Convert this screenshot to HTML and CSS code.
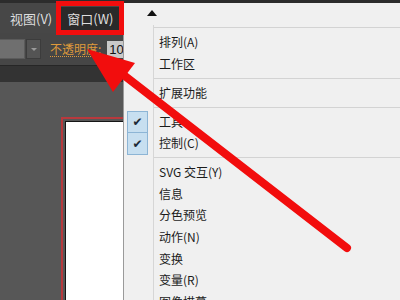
FILE: index.html
```html
<!DOCTYPE html>
<html lang="zh-CN">
<head>
<meta charset="utf-8">
<link rel="stylesheet" href="styles.css">
</head>
<body>
<div class="app">
  <div class="menubar">
    <span class="mb-item">视图(V)</span>
    <span class="mb-item active">窗口(W)</span>
  </div>
  <div class="toolbar">
    <div class="select"></div>
    <div class="select-btn"><span class="tri-down"></span></div>
    <span class="opacity-label">不透明度:</span>
    <span class="num-input">10</span>
  </div>
  <div class="tabband"></div>
  <div class="canvas">
    <div class="artboard-frame"><div class="artboard"></div></div>
  </div>
</div>

<div class="dropdown">
  <div class="dd-head"><span class="tri-up"></span></div>
  <div class="dd-list">
    <div class="sep first"></div>
    <div class="item"><span class="gut"></span><span class="lbl">排列(A)</span></div>
    <div class="item"><span class="gut"></span><span class="lbl">工作区</span></div>
    <div class="sep"></div>
    <div class="item"><span class="gut"></span><span class="lbl">扩展功能</span></div>
    <div class="sep"></div>
    <div class="item"><span class="gut"><span class="check">✔</span></span><span class="lbl">工具</span></div>
    <div class="item"><span class="gut"><span class="check">✔</span></span><span class="lbl">控制(C)</span></div>
    <div class="sep"></div>
    <div class="item"><span class="gut"></span><span class="lbl">SVG 交互(Y)</span></div>
    <div class="item"><span class="gut"></span><span class="lbl">信息</span></div>
    <div class="item"><span class="gut"></span><span class="lbl">分色预览</span></div>
    <div class="item"><span class="gut"></span><span class="lbl">动作(N)</span></div>
    <div class="item"><span class="gut"></span><span class="lbl">变换</span></div>
    <div class="item"><span class="gut"></span><span class="lbl">变量(R)</span></div>
    <div class="item"><span class="gut"></span><span class="lbl">图像描摹</span></div>
  </div>
</div>

<div class="redbox"></div>
<svg class="arrow" width="400" height="300" viewBox="0 0 400 300">
  <line x1="347" y1="248" x2="112" y2="66" stroke="#f20d0d" stroke-width="8" stroke-linecap="round"/>
  <polygon points="87,49 113,92 135,63" fill="#f20d0d"/>
</svg>
</body>
</html>
```
FILE: styles.css
```css
html, body {
  margin: 0;
  padding: 0;
}
body {
  width: 400px;
  height: 300px;
  overflow: hidden;
  position: relative;
  font-family: "Noto Sans CJK SC", "Microsoft YaHei", sans-serif;
  background: #575757;
}
.app {
  display: flex;
  flex-direction: column;
  height: 300px;
  overflow: hidden;
}
.menubar {
  height: 30px;
  border-top: 3px solid #2c2c2c;
  background: #474747;
  display: flex;
  align-items: center;
  padding-left: 3px;
}
.mb-item {
  font-size: 13px;
  color: #dedede;
  padding: 0 7px;
  height: 23px;
  line-height: 24px;
}
.mb-item.active {
  background: #2a2a2a;
  margin-left: 1px;
}
.toolbar {
  height: 32px;
  background: #464646;
  display: flex;
  align-items: center;
}
.select {
  width: 24px;
  height: 18px;
  background: #6f6f6f;
  border: 1px solid #5b5b5b;
  border-left: none;
}
.select-btn {
  width: 13px;
  height: 18px;
  margin-left: 1px;
  background: #545454;
  border: 1px solid #3c3c3c;
  display: flex;
  align-items: center;
  justify-content: center;
}
.tri-down {
  width: 0;
  height: 0;
  border-left: 3px solid transparent;
  border-right: 3px solid transparent;
  border-top: 3px solid #9a9a9a;
}
.opacity-label {
  margin-left: 9px;
  font-size: 12px;
  color: #df9a3b;
  line-height: 15px;
  border-bottom: 1px dotted #df9a3b;
}
.num-input {
  margin-left: 6px;
  width: 20px;
  height: 17px;
  line-height: 17px;
  background: #c9c9c9;
  color: #111;
  font-size: 13px;
  padding-left: 2px;
  font-family: "Liberation Sans", sans-serif;
}
.tabband {
  height: 16px;
  background: #333333;
  border-top: 1px solid #262626;
}
.canvas {
  flex: 1;
  min-height: 0;
  overflow: hidden;
  background: #575757;
  padding-top: 35px;
  padding-left: 61px;
}
.artboard-frame {
  border-top: 2px solid #b8393d;
  border-left: 2px solid #b8393d;
  padding: 2px 0 0 2px;
  height: 200px;
}
.artboard {
  border-top: 1px solid #151515;
  border-left: 1px solid #151515;
  background: #ffffff;
  height: 200px;
}
.dropdown {
  position: absolute;
  left: 123px;
  top: 3px;
  right: 0;
  bottom: 0;
  overflow: hidden;
  background: #f0f0f0;
  border-left: 1px solid #9a9a9a;
}
.dd-head {
  height: 24px;
  position: relative;
}
.tri-up {
  position: absolute;
  left: 23px;
  top: 7px;
  width: 0;
  height: 0;
  border-left: 5px solid transparent;
  border-right: 5px solid transparent;
  border-bottom: 6px solid #111;
}
.dd-list {
  position: relative;
}
.dd-list::before {
  content: "";
  position: absolute;
  left: 29px;
  top: -2px;
  bottom: -40px;
  width: 1px;
  background: #d6d6d6;
}
.sep {
  height: 1px;
  margin: 3.2px 0 3.2px 30px;
  background: #d3d3d3;
}
.sep.first {
  margin-top: 0;
}
.item {
  height: 21.6px;
  display: flex;
  align-items: stretch;
  font-size: 12px;
  color: #1b1b1b;
}
.gut {
  width: 29px;
  position: relative;
}
.check {
  position: absolute;
  left: 3px;
  top: 0;
  width: 19px;
  height: 20.6px;
  background: #c7dff0;
  border: 1px solid #8db5d5;
  border-bottom: none;
  display: flex;
  align-items: center;
  justify-content: center;
  font-size: 12px;
  color: #1d2a36;
  font-family: "DejaVu Sans", sans-serif;
}
.item + .item .check {
  border-bottom: 1px solid #8db5d5;
  border-top: 1px solid #8db5d5;
}
.lbl {
  padding-left: 6px;
  line-height: 21.6px;
  white-space: nowrap;
}
.redbox {
  position: absolute;
  left: 56px;
  top: 1px;
  width: 58px;
  height: 24px;
  border: 5px solid #f20d0d;
}
.arrow {
  position: absolute;
  left: 0;
  top: 0;
}
```
